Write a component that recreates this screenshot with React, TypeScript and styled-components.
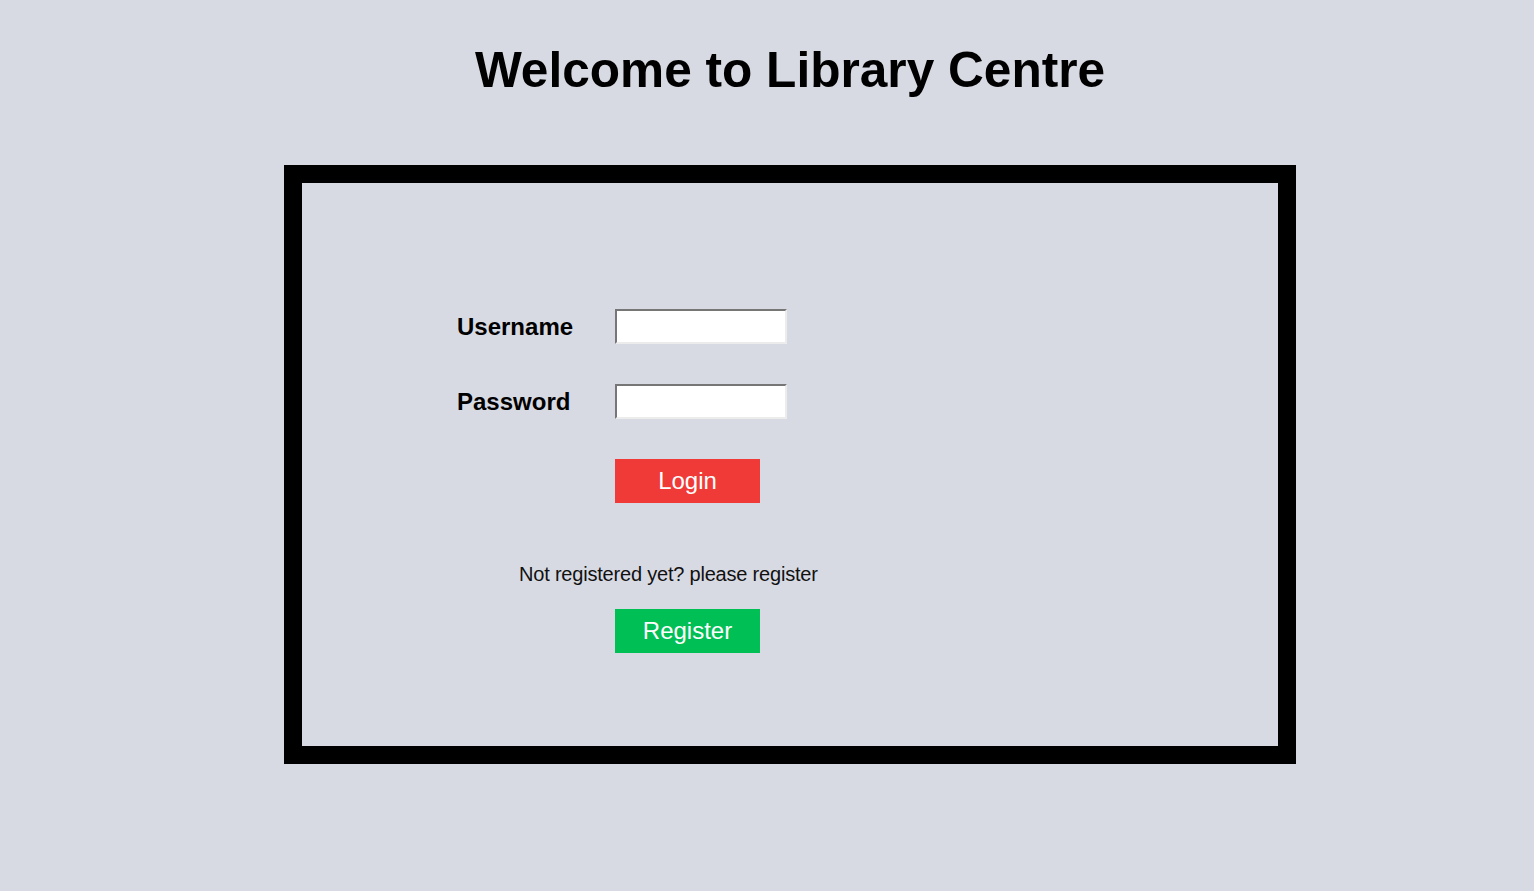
import React from "react";
import styled, { createGlobalStyle } from "styled-components";

const Global = createGlobalStyle`
  html, body {
    margin: 0;
    padding: 0;
    background: #d8dae3;
    font-family: "Liberation Sans", Arial, sans-serif;
  }
`;

const Page = styled.div`
  min-height: 891px;
  box-sizing: border-box;
  padding: 41px 0 0 46px;
  display: flex;
  flex-direction: column;
  align-items: center;
`;

const Title = styled.h1`
  margin: 0;
  font-size: 49.6px;
  line-height: 58px;
  font-weight: 700;
  color: #000;
`;

const Frame = styled.div`
  margin-top: 66px;
  width: 1012px;
  height: 599px;
  box-sizing: border-box;
  border: 18px solid #000;
  padding: 126px 0 0 155px;
`;

const FormGrid = styled.div`
  display: grid;
  grid-template-columns: 158px 172px;
  grid-auto-rows: auto;
  row-gap: 40px;
  align-items: center;
`;

const Label = styled.label`
  font-size: 24px;
  font-weight: 700;
  color: #000;
`;

const Input = styled.input`
  width: 172px;
  height: 35px;
  box-sizing: border-box;
  background: #fff;
  border-style: solid;
  border-width: 2px;
  border-color: #767676 #ececec #ececec #767676;
  padding: 0 4px;
  font-family: inherit;
  font-size: 16px;
  outline: none;
`;

const Button = styled.button<{ $tone: "red" | "green" }>`
  width: 145px;
  height: 44px;
  border: none;
  padding: 0;
  background: ${(p) => (p.$tone === "red" ? "#ef3a37" : "#00bf55")};
  color: #fff;
  font-family: "Liberation Sans", Arial, sans-serif;
  font-size: 24px;
  cursor: pointer;
`;

const ButtonCell = styled.div`
  grid-column: 2;
`;

const Prompt = styled.p`
  margin: 60px 0 0 62px;
  font-size: 20px;
  line-height: 23px;
  color: #111;
  letter-spacing: -0.2px;
`;

const RegisterRow = styled.div`
  margin: 23px 0 0 158px;
`;

export default function App() {
  return (
    <>
      <Global />
      <Page>
        <Title>Welcome to Library Centre</Title>
        <Frame>
          <FormGrid>
            <Label htmlFor="username">Username</Label>
            <Input id="username" type="text" />
            <Label htmlFor="password">Password</Label>
            <Input id="password" type="password" />
            <ButtonCell>
              <Button $tone="red">Login</Button>
            </ButtonCell>
          </FormGrid>
          <Prompt>Not registered yet? please register</Prompt>
          <RegisterRow>
            <Button $tone="green">Register</Button>
          </RegisterRow>
        </Frame>
      </Page>
    </>
  );
}
